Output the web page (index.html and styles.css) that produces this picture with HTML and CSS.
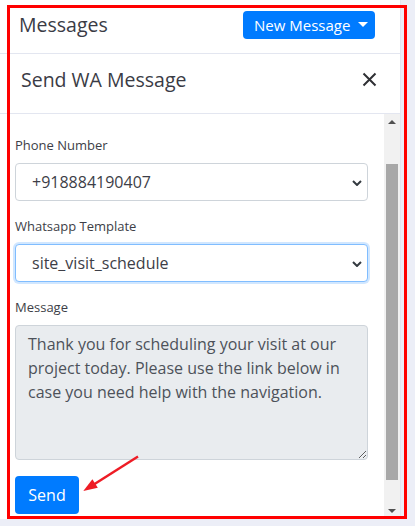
FILE: index.html
```html
<!DOCTYPE html>
<html lang="en">
<head>
    <meta charset="UTF-8">
    <meta name="viewport" content="width=device-width, initial-scale=1.0">
    <title>Messages</title>
    <link rel="stylesheet" href="styles.css">
</head>
<body>
    <div class="panel">
        <div class="top-bar">
            <h2 class="top-title">Messages</h2>
            <button class="btn btn-primary btn-new">New Message <span class="caret"></span></button>
        </div>

        <div class="modal-header">
            <h5 class="modal-title">Send WA Message</h5>
            <button class="close-button" aria-label="Close">
                <svg width="15" height="15" viewBox="0 0 15 15">
                    <path d="M1.5 1.5 L13.5 13.5 M13.5 1.5 L1.5 13.5" stroke="#2f3034" stroke-width="2" fill="none"/>
                </svg>
            </button>
        </div>

        <div class="modal-body">
            <form class="wa-form">
                <div class="form-group">
                    <label>Phone Number</label>
                    <div class="select-wrap">
                        <select class="form-select">
                            <option>+918884190407</option>
                        </select>
                        <svg class="chevron" width="10" height="6" viewBox="0 0 10 6">
                            <path d="M1 1 L5 5 L9 1" stroke="#343a40" stroke-width="2" fill="none"/>
                        </svg>
                    </div>
                </div>

                <div class="form-group">
                    <label>Whatsapp Template</label>
                    <div class="select-wrap">
                        <select class="form-select focused">
                            <option>site_visit_schedule</option>
                        </select>
                        <svg class="chevron" width="10" height="6" viewBox="0 0 10 6">
                            <path d="M1 1 L5 5 L9 1" stroke="#343a40" stroke-width="2" fill="none"/>
                        </svg>
                    </div>
                </div>

                <div class="form-group">
                    <label>Message</label>
                    <textarea class="form-textarea" readonly>Thank you for scheduling your visit at our project today. Please use the link below in case you need help with the navigation.</textarea>
                </div>

                <button type="button" class="btn btn-primary btn-send">Send</button>
            </form>

            <div class="scrollbar">
                <div class="scroll-btn"><span class="arrow-up"></span></div>
                <div class="scroll-track">
                    <div class="scroll-thumb"></div>
                </div>
                <div class="scroll-btn"><span class="arrow-down"></span></div>
            </div>
        </div>
    </div>

    <!-- annotation -->
    <div class="mark-box"></div>
    <svg class="mark-arrow" width="415" height="526" viewBox="0 0 415 526">
        <line x1="138" y1="456.5" x2="93" y2="485" stroke="#ee1c25" stroke-width="2.5"/>
        <polygon points="83.3,491 92.4,479.3 97.8,487.7" fill="#ee1c25"/>
    </svg>
</body>
</html>
```

FILE: styles.css
```css
* {
    margin: 0;
    padding: 0;
    box-sizing: border-box;
}

body {
    font-family: 'Open Sans', 'Noto Sans', sans-serif;
    background-color: #eceef7;
    width: 415px;
    height: 526px;
    overflow: hidden;
    position: relative;
}

.panel {
    width: 401px;
    height: 519px;
    background: white;
    border-right: 1px solid #e3e6f0;
    display: flex;
    flex-direction: column;
}

.top-bar {
    height: 54px;
    border-bottom: 1px solid #e3e6f0;
    display: flex;
    align-items: center;
    justify-content: space-between;
    padding: 0 25px 4px 19px;
}

.top-title {
    font-size: 19.5px;
    font-weight: 400;
    color: #3a3b45;
}

.btn {
    font-family: inherit;
    border: none;
    border-radius: 4px;
    cursor: pointer;
    white-space: nowrap;
}

.btn-primary {
    background: #007bff;
    color: white;
}

.btn-new {
    width: 132px;
    height: 28px;
    font-size: 15px;
    font-weight: 500;
    display: flex;
    align-items: center;
    gap: 8px;
    padding: 0 8px 0 11px;
}

.caret {
    width: 0;
    height: 0;
    border-left: 5px solid transparent;
    border-right: 5px solid transparent;
    border-top: 5px solid white;
}

.modal-header {
    height: 60px;
    border-bottom: 1px solid #e3e6f0;
    display: flex;
    align-items: center;
    justify-content: space-between;
    padding: 0 23px 8px 21px;
}

.modal-title {
    font-size: 19.5px;
    font-weight: 400;
    color: #3a3b45;
}

.close-button {
    background: none;
    border: none;
    display: flex;
    cursor: pointer;
}

.modal-body {
    flex: 1;
    display: flex;
    min-height: 0;
}

.wa-form {
    flex: 1;
    padding: 21px 16px 0 15px;
}

.form-group {
    margin-bottom: 15px;
}

.form-group label {
    display: block;
    font-size: 13px;
    line-height: 20px;
    color: #3d3e47;
    margin-bottom: 8px;
}

.select-wrap {
    position: relative;
}

.form-select {
    width: 100%;
    height: 38px;
    appearance: none;
    -webkit-appearance: none;
    font-family: inherit;
    font-size: 16px;
    color: #3d3e47;
    background: white;
    border: 1px solid #ced4da;
    border-radius: 4px;
    padding: 0 28px 0 16px;
    outline: none;
}

.form-select.focused {
    border-color: #80bdff;
    box-shadow: 0 0 0 2px rgba(0, 123, 255, 0.18);
}

.chevron {
    position: absolute;
    right: 6px;
    top: 17px;
}

.form-textarea {
    display: block;
    width: 100%;
    height: 135px;
    font-family: inherit;
    font-size: 16px;
    line-height: 24px;
    color: #4d525a;
    background: #e9ecef;
    border: 1px solid #ced4da;
    border-radius: 4px;
    padding: 6px 12px;
    outline: none;
}

.btn-send {
    margin-top: 1px;
    width: 64px;
    height: 38px;
    font-size: 16px;
    font-weight: 500;
}

.scrollbar {
    width: 16px;
    background: #f1f1f1;
    display: flex;
    flex-direction: column;
}

.scroll-btn {
    height: 16px;
    display: flex;
    align-items: center;
    justify-content: center;
}

.arrow-up,
.arrow-down {
    width: 0;
    height: 0;
    border-left: 4px solid transparent;
    border-right: 4px solid transparent;
}

.arrow-up {
    border-bottom: 4px solid #505050;
}

.arrow-down {
    border-top: 4px solid #505050;
}

.scroll-track {
    flex: 1;
    padding: 34px 2px 0 2px;
}

.scroll-thumb {
    height: 316px;
    background: #a8a8a8;
}

.mark-box {
    position: absolute;
    left: 7px;
    top: 5px;
    width: 400px;
    height: 514px;
    border: 3px solid #ff0000;
}

.mark-arrow {
    position: absolute;
    left: 0;
    top: 0;
}
```
